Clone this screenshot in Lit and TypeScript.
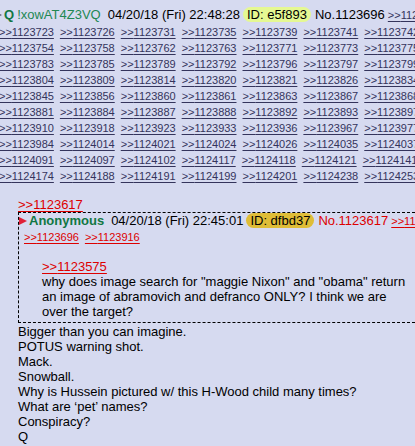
import { LitElement, html, css } from "lit";
import { customElement } from "lit/decorators.js";

const replies: string[][] = [
  ["1123723", "1123726", "1123731", "1123735", "1123739", "1123741", "1123742"],
  ["1123754", "1123758", "1123762", "1123763", "1123771", "1123773", "1123775"],
  ["1123783", "1123785", "1123789", "1123792", "1123796", "1123797", "1123799"],
  ["1123804", "1123809", "1123814", "1123820", "1123821", "1123826", "1123834"],
  ["1123845", "1123856", "1123860", "1123861", "1123863", "1123867", "1123868"],
  ["1123881", "1123884", "1123887", "1123888", "1123892", "1123893", "1123897"],
  ["1123910", "1123918", "1123923", "1123933", "1123936", "1123967", "1123977"],
  ["1123984", "1124014", "1124021", "1124024", "1124026", "1124035", "1124037"],
  ["1124091", "1124097", "1124102", "1124117", "1124118", "1124121", "1124141"],
  ["1124174", "1124188", "1124191", "1124199", "1124201", "1124238", "1124253"],
];

const message = [
  "Bigger than you can imagine.",
  "POTUS warning shot.",
  "Mack.",
  "Snowball.",
  "Why is Hussein pictured w/ this H-Wood child many times?",
  "What are ‘pet’ names?",
  "Conspiracy?",
  "Q",
];

const ref = (id: string) => html`<a href="#p${id}">&gt;&gt;${id}</a>`;
const arrow = html`<svg class="arrow" viewBox="0 0 8 9" aria-hidden="true"><path d="M0 1L8 5L0 9Z" /></svg>`;

@customElement("app-root")
export class AppRoot extends LitElement {
  static styles = css`
    :host {
      display: block;
      box-sizing: border-box;
      min-height: 100vh;
      overflow: hidden;
      padding-top: 7px;
      background: #d6daf0;
      color: #000;
      font: 13px/15px "Liberation Sans", Arial, sans-serif;
    }
    .head {
      display: flex;
      align-items: baseline;
      white-space: nowrap;
      line-height: 16px;
    }
    .post-head {
      margin: 0 0 1px -6px;
    }
    .arrow {
      width: 8px;
      height: 9px;
      fill: #5c5f78;
      flex: none;
    }
    .quote .arrow {
      fill: #e02038;
    }
    .name {
      color: #117743;
      font-weight: bold;
      padding-left: 2px;
    }
    .trip {
      color: #228854;
      padding-left: 3px;
    }
    .date {
      padding-left: 7px;
    }
    .id {
      border-radius: 8px;
      line-height: 15px;
      margin: 0 4px 0 3px;
      padding: 0 4px;
    }
    .lime {
      background: #e5f893;
    }
    .gold {
      background: #dfbd37;
    }
    .refs {
      display: flex;
      gap: 6px;
      white-space: nowrap;
      font-size: 11px;
      line-height: 16px;
    }
    .main-refs {
      margin-left: -1px;
    }
    .after {
      font-size: 11px;
      padding-left: 3px;
    }
    a {
      color: #34345c;
      text-underline-offset: 2px;
    }
    .red,
    .red a {
      color: #dd0000;
    }
    .body {
      margin: 13px 0 0 18px;
    }
    .quote {
      border: 1px dashed #000;
      border-right: 0;
      margin-bottom: 1px;
      padding-bottom: 3px;
    }
    .quote .refs {
      padding-left: 5px;
    }
    .quote-text {
      margin: 14px 0 0 23px;
      max-width: 368px;
    }
    p {
      margin: 0;
    }
  `;

  render() {
    return html`
      <article>
        <header class="head post-head">
          ${arrow}
          <span class="name">Q</span>
          <span class="trip">!xowAT4Z3VQ</span>
          <time class="date">04/20/18 (Fri) 22:48:28</time>
          <span class="id lime">ID: e5f893</span>
          <span>No.1123696</span>
          <span class="after">${ref("1123701")}</span>
        </header>
        ${replies.map((row) => html`<div class="refs main-refs">${row.map(ref)}</div>`)}
        <div class="body">
          <p class="red">${ref("1123617")}</p>
          <section class="quote">
            <header class="head">
              ${arrow}
              <span class="name">Anonymous</span>
              <time class="date">04/20/18 (Fri) 22:45:01</time>
              <span class="id gold">ID: dfbd37</span>
              <span class="red">No.1123617</span>
              <span class="after red">${ref("1123660")}</span>
            </header>
            <div class="refs red">${ref("1123696")}${ref("1123916")}</div>
            <div class="quote-text">
              <p class="red">${ref("1123575")}</p>
              <p>
                why does image search for "maggie Nixon" and "obama" return an image of abramovich and
                defranco ONLY? I think we are over the target?
              </p>
            </div>
          </section>
          ${message.map((line) => html`<p>${line}</p>`)}
        </div>
      </article>
    `;
  }
}
